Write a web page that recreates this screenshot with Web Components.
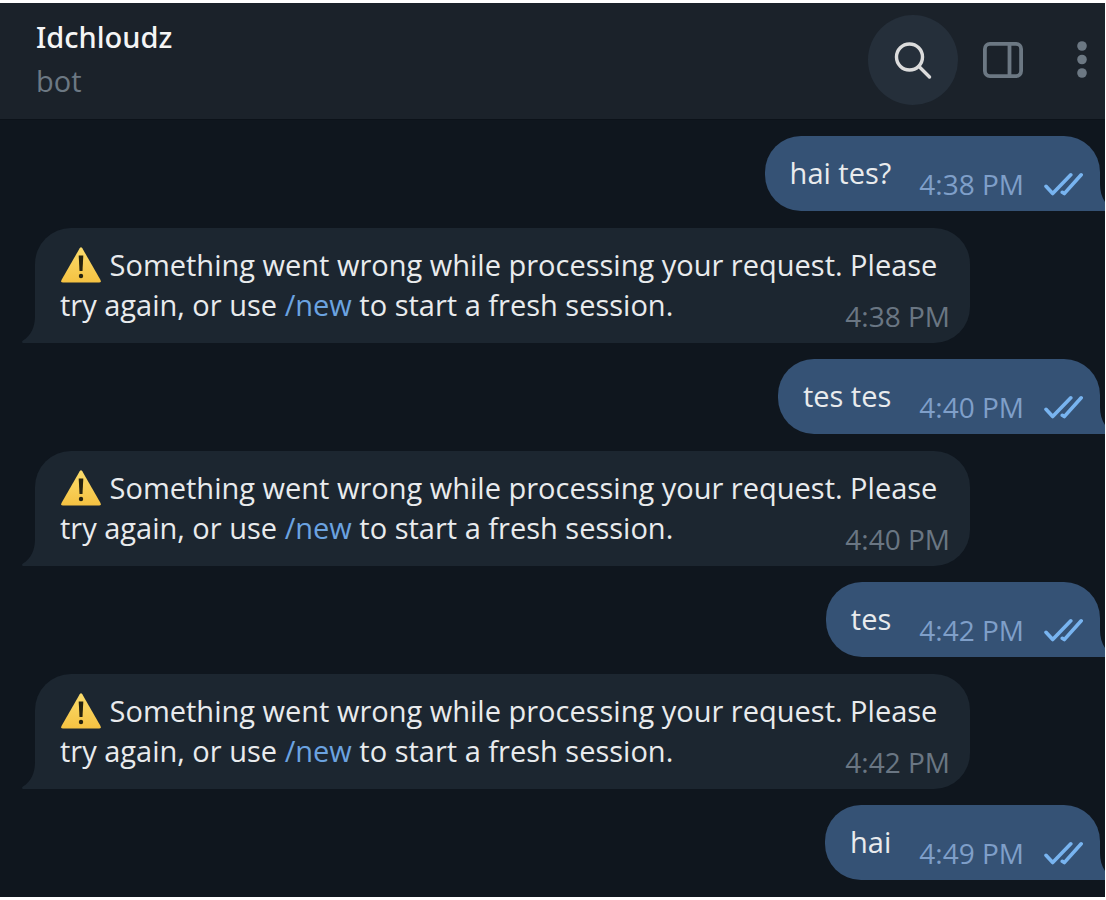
<!DOCTYPE html>
<html lang="en">
<head>
<meta charset="utf-8">
<meta name="viewport" content="width=device-width, initial-scale=1">
<title>Idchloudz</title>
<style>
  body { margin: 0; background: #fff; }
</style>
</head>
<body>
<chat-app>
  <chat-header slot="header" name="Idchloudz" status="bot"></chat-header>
  <chat-message kind="out" time="4:38 PM">hai tes?</chat-message>
  <chat-message kind="in" time="4:38 PM"><warning-sign></warning-sign> Something went wrong while processing your request. Please <wbr>try again, or use <bot-command name="/new"></bot-command> to start a fresh session.</chat-message>
  <chat-message kind="out" time="4:40 PM">tes tes</chat-message>
  <chat-message kind="in" time="4:40 PM"><warning-sign></warning-sign> Something went wrong while processing your request. Please <wbr>try again, or use <bot-command name="/new"></bot-command> to start a fresh session.</chat-message>
  <chat-message kind="out" time="4:42 PM">tes</chat-message>
  <chat-message kind="in" time="4:42 PM"><warning-sign></warning-sign> Something went wrong while processing your request. Please <wbr>try again, or use <bot-command name="/new"></bot-command> to start a fresh session.</chat-message>
  <chat-message kind="out" time="4:49 PM">hai</chat-message>
</chat-app>

<script>
const define = (name, html, setup) => {
  const template = document.createElement('template');
  template.innerHTML = html;
  customElements.define(name, class extends HTMLElement {
    constructor() {
      super();
      this.attachShadow({ mode: 'open' }).append(template.content.cloneNode(true));
    }
    connectedCallback() {
      if (setup) setup(this, this.shadowRoot);
    }
  });
};

define('chat-app', `
  <style>
    :host {
      display: block; margin: 3px 1px 3px 0; overflow: hidden;
      background: #0f161e; color: #e9ebed;
      font: 29px/40px "Open Sans", "Noto Sans", sans-serif;
    }
    main { display: flex; flex-direction: column; padding: 0 5px 17px 35px; }
  </style>
  <slot name="header"></slot>
  <main><slot></slot></main>
`);

define('chat-header', `
  <style>
    :host { display: block; }
    header {
      display: flex; align-items: flex-start; padding: 12px 0 14px 36px;
      background: #1b222a; border-bottom: 1px solid #0c1219;
    }
    .peer { flex: 1; min-width: 0; line-height: 44px; }
    h1 { margin: 0; font-family: "Noto Sans", sans-serif; font-size: 29px; font-weight: 500; line-height: 44px; color: #f5f5f5; }
    p { margin: 0; color: #6c7883; }
    nav { display: flex; }
    button {
      display: flex; align-items: center; justify-content: center;
      width: 90px; height: 90px; padding: 0; border: 0; border-radius: 45px;
      background: none; color: #6c7883;
    }
    .search { background: #252f3a; color: #dcdcdc; }
    .more { width: 57px; padding-right: 18px; justify-content: flex-end; border-radius: 0; }
    svg { display: block; fill: none; stroke: currentColor; }
  </style>
  <header>
    <div class="peer"><h1></h1><p></p></div>
    <nav>
      <button class="search" type="button" aria-label="Search">
        <svg width="40" height="40" viewBox="0 0 40 40" stroke-width="3.4" stroke-linecap="round"><circle cx="16.5" cy="17" r="13"/><path d="M26 26.500 36.500 37"/></svg>
      </button>
      <button type="button" aria-label="Side panel">
        <svg width="40" height="36" viewBox="0 0 40 36" stroke-width="3.8"><rect x="1.9" y="1.900" width="36.200" height="32.200" rx="5"/><path d="M26.500 2v32"/></svg>
      </button>
      <button class="more" type="button" aria-label="More">
        <svg width="10" height="38" viewBox="0 0 10 38" style="fill:currentColor;stroke:none"><circle cx="5" cy="5" r="4.8"/><circle cx="5" cy="18.500" r="4.800"/><circle cx="5" cy="32" r="4.800"/></svg>
      </button>
    </nav>
  </header>
`, (el, root) => {
  root.querySelector('h1').textContent = el.getAttribute('name');
  root.querySelector('p').textContent = el.getAttribute('status');
});

define('chat-message', `
  <style>
    :host { display: block; position: relative; border-radius: 36px; --bubble: #1c2630; background: var(--bubble); }
    :host([kind="in"]) { align-self: flex-start; max-width: 935px; margin-top: 17px; border-bottom-left-radius: 0; }
    :host([kind="out"]) { align-self: flex-end; margin-top: 16px; border-bottom-right-radius: 0; --bubble: #355275; }
    .body { display: grid; }
    .text { padding: 17px 25px 18px; }
    .meta { display: flex; align-items: center; gap: 20px; align-self: end; padding-bottom: 7px; color: #6a7683; font-size: 28px; }
    :host([kind="in"]) .text, :host([kind="in"]) .meta { grid-area: 1 / 1; }
    :host([kind="in"]) .meta { justify-self: end; padding-right: 20px; }
    :host([kind="out"]) .body { display: flex; }
    :host([kind="out"]) .text { padding-right: 28px; }
    :host([kind="out"]) .meta { padding-right: 17px; color: #7f9fc9; }
    .checks { display: none; fill: none; stroke: #78b4f0; stroke-width: 3.6; stroke-linecap: round; stroke-linejoin: round; }
    :host([kind="out"]) .checks { display: block; }
    .tail { position: absolute; bottom: 0; right: 100%; fill: var(--bubble); }
    :host([kind="out"]) .tail { right: auto; left: 100%; transform: scaleX(-1); }
  </style>
  <div class="body">
    <div class="text"><slot></slot></div>
    <div class="meta">
      <time></time>
      <svg class="checks" width="39" height="24" viewBox="0 0 39 24" role="img" aria-label="Read"><path d="M2 14.300 8.700 21.500 26.800 2.800M18.300 20.300l2 1.300L37.200 2.800"/></svg>
    </div>
  </div>
  <svg class="tail" width="13" height="36" viewBox="0 0 13 36" aria-hidden="true"><path d="M13 0V36H1Q-1 35 1 33.500C9 28.500 13 20 13 9Z"/></svg>
`, (el, root) => {
  root.querySelector('time').textContent = el.getAttribute('time');
  if (el.getAttribute('kind') === 'in') root.querySelector('.checks').remove();
});

define('bot-command', `
  <style>
    :host { display: inline; }
    a { color: #6ba3e0; text-decoration: none; }
  </style><a href="#new"></a>`, (el, root) => {
  root.querySelector('a').textContent = el.getAttribute('name');
});

define('warning-sign', `
  <style>
    :host { display: inline-block; width: 42px; height: 36px; vertical-align: -7px; }
    svg { display: block; }
  </style>
  <svg width="42" height="36" viewBox="0 0 42 36" role="img" aria-label="Warning">
    <defs><linearGradient id="g" x1="0" y1="0" x2="0" y2="1"><stop offset="0" stop-color="#fbdc6c"/><stop offset="1" stop-color="#f5c242"/></linearGradient></defs>
    <path d="M19.700 1.200Q21 -.5 22.300 1.200L40.500 33Q41.500 35.500 39 35.500H3Q.5 35.500 1.500 33Z" fill="url(#g)"/>
    <path d="M18.700 8.500h4.600l-.8 15.500h-3z" fill="#25220f"/><circle cx="21" cy="29" r="2.200" fill="#25220f"/>
  </svg>
`);
</script>
</body>
</html>
